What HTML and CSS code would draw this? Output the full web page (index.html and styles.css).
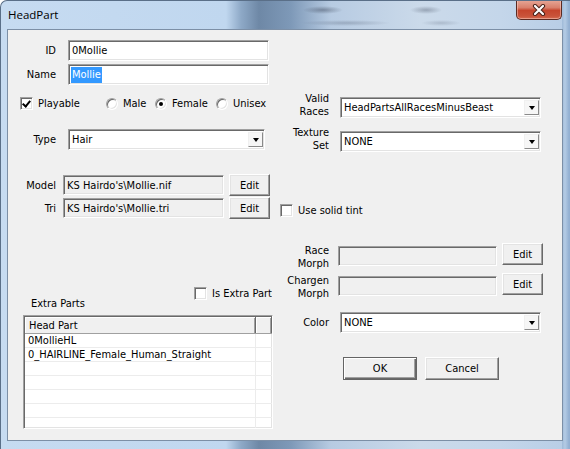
FILE: index.html
```html
<!DOCTYPE html>
<html lang="en">
<head>
    <meta charset="UTF-8">
    <title>HeadPart</title>
    <link rel="stylesheet" href="styles.css">
</head>
<body>
    <div class="window">
        <div class="titlebar">
            <span class="title">HeadPart</span>
            <div class="close-btn">
                <svg width="14" height="12" viewBox="0 0 14 12">
                    <path d="M3 2 L11 10 M11 2 L3 10" stroke="#4a2219" stroke-width="4.2" stroke-linecap="round"/>
                    <path d="M3 2 L11 10 M11 2 L3 10" stroke="#fff" stroke-width="2.2" stroke-linecap="round"/>
                </svg>
            </div>
        </div>

        <div class="client">
            <div class="col-left">
                <div class="row row-id">
                    <span class="lbl">ID</span>
                    <div class="edit sunken wide">0Mollie</div>
                </div>
                <div class="row row-name">
                    <span class="lbl">Name</span>
                    <div class="edit sunken wide"><span class="selected">Mollie</span></div>
                </div>
                <div class="row row-checks">
                    <label class="opt opt-playable"><span class="check sunken checked"></span>Playable</label>
                    <label class="opt opt-male"><span class="radio"></span>Male</label>
                    <label class="opt opt-female"><span class="radio on"></span>Female</label>
                    <label class="opt opt-unisex"><span class="radio"></span>Unisex</label>
                </div>
                <div class="row row-type">
                    <span class="lbl">Type</span>
                    <div class="combo sunken type-combo">
                        <span class="combo-text">Hair</span>
                        <span class="drop"></span>
                    </div>
                </div>
                <div class="row row-file row-model">
                    <span class="lbl">Model</span>
                    <div class="edit sunken disabled path">KS Hairdo's\Mollie.nif</div>
                    <div class="btn edit-btn">Edit</div>
                </div>
                <div class="row row-file row-tri">
                    <span class="lbl">Tri</span>
                    <div class="edit sunken disabled path">KS Hairdo's\Mollie.tri</div>
                    <div class="btn edit-btn">Edit</div>
                </div>

                <div class="extra-head">
                    <span class="extra-label">Extra Parts</span>
                    <label class="opt opt-extra"><span class="check sunken"></span>Is Extra Part</label>
                </div>
                <div class="list sunken">
                    <div class="list-head">
                        <div class="head-cell main">Head Part</div>
                        <div class="head-cell rest"></div>
                    </div>
                    <div class="list-row"><div class="cell main">0MollieHL</div><div class="cell"></div></div>
                    <div class="list-row"><div class="cell main">0_HAIRLINE_Female_Human_Straight</div><div class="cell"></div></div>
                    <div class="list-row"><div class="cell main"></div><div class="cell"></div></div>
                    <div class="list-row"><div class="cell main"></div><div class="cell"></div></div>
                    <div class="list-row"><div class="cell main"></div><div class="cell"></div></div>
                    <div class="list-row"><div class="cell main"></div><div class="cell"></div></div>
                    <div class="list-row"><div class="cell main"></div><div class="cell"></div></div>
                </div>
            </div>

            <div class="col-right">
                <div class="row row-pair row-races">
                    <span class="lbl2">Valid<br>Races</span>
                    <div class="combo sunken">
                        <span class="combo-text">HeadPartsAllRacesMinusBeast</span>
                        <span class="drop"></span>
                    </div>
                </div>
                <div class="row row-pair row-texture">
                    <span class="lbl2">Texture<br>Set</span>
                    <div class="combo sunken">
                        <span class="combo-text">NONE</span>
                        <span class="drop"></span>
                    </div>
                </div>
                <div class="row row-tint">
                    <label class="opt"><span class="check sunken"></span>Use solid tint</label>
                </div>
                <div class="row row-morph row-race-morph">
                    <span class="lbl2">Race<br>Morph</span>
                    <div class="edit sunken disabled morph"></div>
                    <div class="btn morph-btn">Edit</div>
                </div>
                <div class="row row-morph row-chargen">
                    <span class="lbl2">Chargen<br>Morph</span>
                    <div class="edit sunken disabled morph"></div>
                    <div class="btn morph-btn">Edit</div>
                </div>
                <div class="row row-color">
                    <span class="lbl2">Color</span>
                    <div class="combo sunken">
                        <span class="combo-text">NONE</span>
                        <span class="drop"></span>
                    </div>
                </div>
                <div class="row row-buttons">
                    <div class="btn default">OK</div>
                    <div class="btn">Cancel</div>
                </div>
            </div>
        </div>
    </div>
</body>
</html>
```

FILE: styles.css
```css
body {
    margin: 0;
    background: #fff;
    font-family: "DejaVu Sans Condensed", "DejaVu Sans", sans-serif;
    font-stretch: condensed;
    font-size: 11px;
    color: #000;
}

/* window frame (aero glass) */
.window {
    width: 570px;
    height: 449px;
    box-sizing: border-box;
    display: flex;
    flex-direction: column;
    border-top: 1px solid #5a6f88;
    border-left: 1px solid #5a6f88;
    border-radius: 7px 0 0 0;
    overflow: hidden;
    background:
        linear-gradient(to right, transparent 561px, #9fbad8 561px, #b4cbe4 564px, #93b0d2 568px),
        linear-gradient(to right, #c6dbf1 0, #c0d7ef 225px, #8ea9c7 240px, #6e88a6 258px, #7e99b8 290px, #b7cbe2 330px, #cbdaea 420px, #c4d6ea 500px, #b7cde6 100%);
}

/* glass shows the blurred window behind */
.titlebar {
    height: 28px;
    display: flex;
    justify-content: space-between;
    align-items: flex-start;
    flex-shrink: 0;
    background:
        radial-gradient(ellipse 20px 4px at 322px 9px, rgba(55, 65, 85, 0.45), transparent),
        radial-gradient(ellipse 16px 4px at 425px 9px, rgba(55, 65, 85, 0.35), transparent),
        radial-gradient(ellipse 45px 3px at 345px 22px, rgba(55, 65, 85, 0.25), transparent),
        radial-gradient(ellipse 20px 3px at 440px 22px, rgba(55, 65, 85, 0.2), transparent);
}

.title {
    font-family: "Open Sans", "Noto Sans", sans-serif;
    font-stretch: normal;
    font-size: 11.5px;
    line-height: 14px;
    margin: 7px 0 0 7px;
    color: #000;
}

.close-btn {
    width: 44px;
    height: 19px;
    margin: -1px 8px 0 0;
    border: 1px solid #5b2a22;
    border-top: none;
    border-radius: 0 0 5px 5px;
    display: flex;
    align-items: center;
    justify-content: center;
    background: linear-gradient(#e7a898 0, #d9806c 40%, #c5452d 55%, #c9533a 85%, #d56c52 100%);
    box-shadow: inset 0 0 0 1px rgba(255, 220, 210, 0.45);
}

.client {
    flex: 1;
    margin: 0 7px 8px 6px;
    border: 1px solid #7c8fa6;
    background: #f0f0f0;
    display: flex;
}

.col-left {
    width: 272px;
    flex-shrink: 0;
    display: flex;
    flex-direction: column;
}

.col-right {
    flex: 1;
    display: flex;
    flex-direction: column;
}

.row {
    display: flex;
    align-items: center;
}

.lbl {
    width: 48px;
    flex-shrink: 0;
    text-align: right;
}

.lbl2 {
    width: 49px;
    flex-shrink: 0;
    text-align: right;
    line-height: 13px;
}

/* classic 3d borders */
.sunken {
    box-sizing: border-box;
    border: 1px solid;
    border-color: #a0a0a0 #fff #fff #a0a0a0;
    box-shadow: inset 1px 1px 0 #696969, inset -1px -1px 0 #e3e3e3;
}

.btn {
    box-sizing: border-box;
    display: flex;
    align-items: center;
    justify-content: center;
    background: #f0f0f0;
    border: 1px solid;
    border-color: #fff #696969 #696969 #fff;
    box-shadow: inset -1px -1px 0 #a0a0a0, inset 1px 1px 0 #e3e3e3;
}

.btn.default {
    border-color: #646464;
    box-shadow: inset 1px 1px 0 #fff, inset -1px -1px 0 #696969, inset -2px -2px 0 #a0a0a0;
}

.edit {
    height: 21px;
    background: #fff;
    display: flex;
    align-items: center;
    padding-left: 3px;
    white-space: nowrap;
    overflow: hidden;
}

.edit.disabled {
    background: #f0f0f0;
}

.selected {
    background: #3399ff;
    color: #fff;
    padding: 1px 1px 2px;
    margin-left: -1px;
}

.combo {
    width: 201px;
    height: 21px;
    margin-left: 11px;
    background: #fff;
    display: flex;
    align-items: center;
    justify-content: space-between;
}

.combo-text {
    padding-left: 3px;
}

.drop {
    width: 15px;
    height: 15px;
    margin-right: 1px;
    box-sizing: border-box;
    border: 1px solid;
    border-color: #f0f0f0 #8a8a8a #8a8a8a #f0f0f0;
    background: #f6f6f6;
    display: flex;
    align-items: center;
    justify-content: center;
}

.drop::after {
    content: "";
    border-left: 3.5px solid transparent;
    border-right: 3.5px solid transparent;
    border-top: 4px solid #000;
    margin-top: 1px;
}

/* checkboxes and radios */
.opt {
    display: flex;
    align-items: center;
    white-space: nowrap;
}

.check {
    width: 13px;
    height: 13px;
    background: #fff;
    margin-right: 5px;
    flex-shrink: 0;
    position: relative;
}

.check.checked::after {
    content: "";
    position: absolute;
    left: 3px;
    top: 1px;
    width: 3px;
    height: 6px;
    border-right: 2px solid #000;
    border-bottom: 2px solid #000;
    transform: rotate(40deg);
}

.radio {
    width: 12px;
    height: 12px;
    box-sizing: border-box;
    border-radius: 50%;
    border: 1px solid;
    border-color: #a0a0a0 #fff #fff #a0a0a0;
    box-shadow: inset 1px 1px 0 #696969, inset -1px -1px 0 #e3e3e3;
    background: #fff;
    margin-right: 5px;
    flex-shrink: 0;
    display: flex;
    align-items: center;
    justify-content: center;
}

.radio.on::after {
    content: "";
    width: 4px;
    height: 4px;
    border-radius: 50%;
    background: #000;
}

/* left column rows */
.row-id {
    margin-top: 10px;
    height: 21px;
}

.row-name {
    margin-top: 3px;
    height: 21px;
}

.wide {
    width: 201px;
    margin-left: 12px;
}

.row-checks {
    margin-top: 11px;
    height: 15px;
    padding-left: 12px;
}

.opt-playable { width: 86px; }
.opt-male { width: 49px; }
.opt-female { width: 61px; }

.row-type {
    margin-top: 18px;
    height: 21px;
}

.type-combo {
    width: 197px;
    margin-left: 12px;
}

.row-file {
    height: 22px;
}

.row-model { margin-top: 24px; }
.row-tri { margin-top: 1px; }

.path {
    width: 161px;
    height: 20px;
    margin-left: 7px;
}

.edit-btn {
    width: 41px;
    height: 22px;
    margin-left: 5px;
}

.extra-head {
    margin-top: 67px;
    height: 24px;
    display: flex;
    justify-content: space-between;
}

.extra-label {
    align-self: flex-end;
    padding-left: 23px;
    line-height: 13px;
}

.opt-extra {
    align-self: flex-start;
    width: 78px;
    height: 14px;
    margin-right: 8px;
    overflow: hidden;
}

/* list view */
.list {
    margin: 5px 0 0 15px;
    width: 250px;
    height: 114px;
    background: #fff;
    overflow: hidden;
}

.list-head {
    display: flex;
    height: 17px;
    box-sizing: border-box;
    border-bottom: 1px solid #a0a0a0;
    margin: 1px 0 0 1px;
}

.head-cell {
    box-sizing: border-box;
    background: #f0f0f0;
    border-right: 1px solid #696969;
    box-shadow: inset 1px 1px 0 #fff, inset -1px 0 0 #a0a0a0;
    display: flex;
    align-items: center;
}

.head-cell.main {
    width: 231px;
    padding-left: 4px;
}

.head-cell.rest {
    flex: 1;
}

.list-row {
    display: flex;
    height: 14px;
    box-sizing: border-box;
    border-bottom: 1px solid #ececec;
    margin-left: 1px;
}

.cell {
    flex: 1;
    line-height: 13px;
    white-space: nowrap;
}

.cell.main {
    flex: none;
    width: 231px;
    box-sizing: border-box;
    border-right: 1px solid #ececec;
    padding-left: 3px;
}

/* right column rows */
.row-pair {
    height: 26px;
    align-items: flex-end;
}

.row-races { margin-top: 62px; }
.row-texture { margin-top: 8px; }

.row-tint {
    margin-top: 51px;
    height: 14px;
}

.row-morph {
    height: 27px;
    align-items: flex-start;
}

.row-morph .lbl2 { margin-top: 1px; }

.row-race-morph { margin-top: 26px; }
.row-chargen { margin-top: 3px; }

.morph {
    width: 159px;
    height: 20px;
    margin: 3px 0 0 9px;
}

.morph-btn {
    width: 41px;
    height: 22px;
    margin-left: 5px;
}

.row-color {
    margin-top: 12px;
    height: 21px;
}

.row-buttons {
    margin-top: 24px;
    padding-left: 63px;
    gap: 8px;
}

.row-buttons .btn {
    width: 74px;
    height: 23px;
}
```
